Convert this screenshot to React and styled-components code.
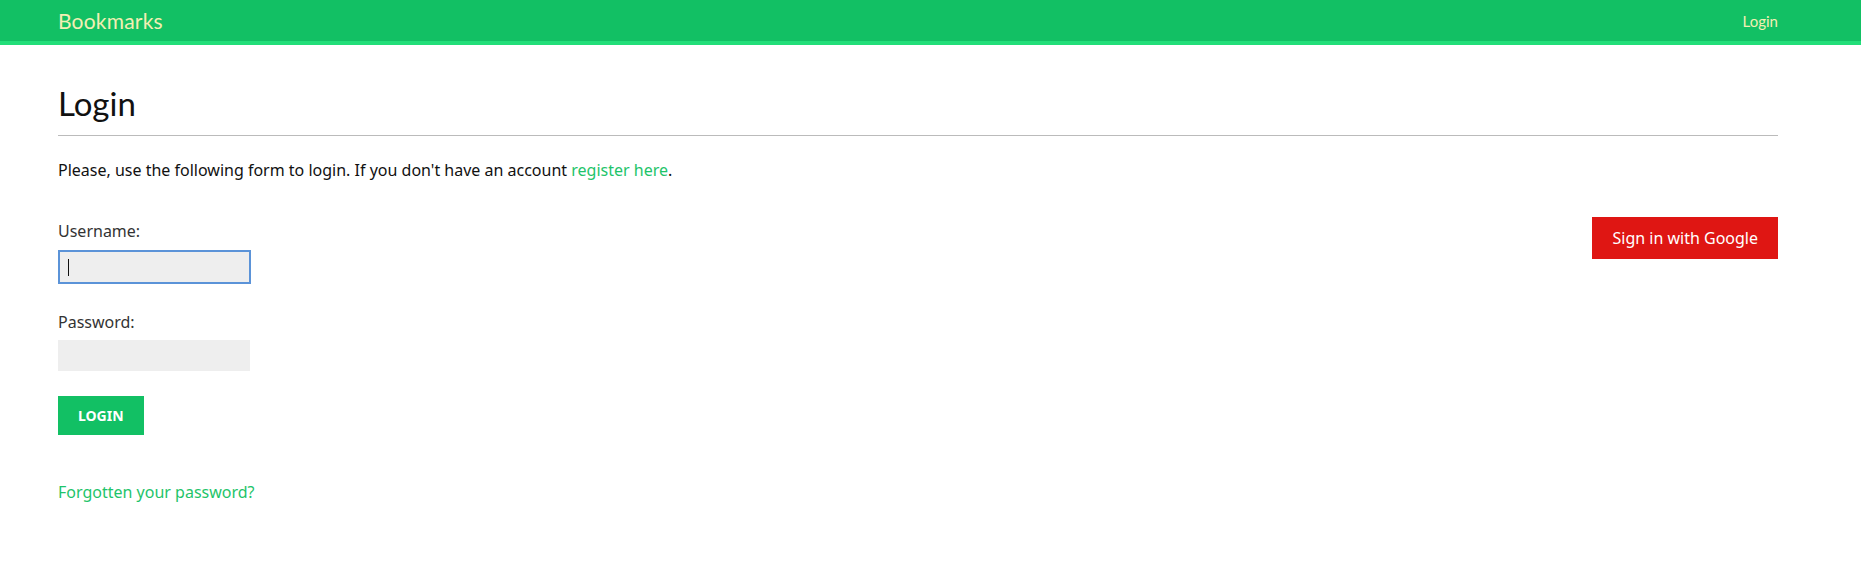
import React from "react";
import styled, { createGlobalStyle } from "styled-components";

const GREEN = "#12c064";
const GREEN_LIGHT = "#22de79";
const LINK = "#1ec46a";
const CREAM = "#f3efb4";
const RED = "#df1613";

const GlobalStyle = createGlobalStyle`
  html, body {
    margin: 0;
    padding: 0;
    background: #fff;
  }
  body {
    font-family: "Noto Sans", "Open Sans", sans-serif;
    color: #111;
  }
`;

const Header = styled.header`
  height: 41px;
  background: ${GREEN};
  border-bottom: 4px solid ${GREEN_LIGHT};
  display: flex;
  align-items: center;
  justify-content: space-between;
  padding: 0 83px 0 58px;
`;

const Brand = styled.span`
  font-family: Lato, "Noto Sans", sans-serif;
  font-size: 21px;
  color: ${CREAM};
  letter-spacing: 0.2px;
`;

const NavLink = styled.a`
  font-family: Lato, "Noto Sans", sans-serif;
  font-size: 15px;
  color: ${CREAM};
  text-decoration: none;
`;

const Main = styled.main`
  padding: 0 83px 0 58px;
`;

const Title = styled.h1`
  font-family: Lato, "Noto Sans", sans-serif;
  font-weight: 400;
  font-size: 33px;
  line-height: 40px;
  margin: 38px 0 0;
  padding-bottom: 12px;
  border-bottom: 1px solid #bbb;
  color: #111;
`;

const Intro = styled.p`
  font-size: 16px;
  line-height: 22px;
  margin: 23px 0 0;
`;

const Link = styled.a`
  color: ${LINK};
  text-decoration: none;
`;

const Row = styled.div`
  display: flex;
  justify-content: space-between;
  align-items: flex-start;
  margin-top: 36px;
`;

const Form = styled.form`
  display: flex;
  flex-direction: column;
  align-items: flex-start;
  padding-top: 3px;
`;

const Label = styled.label`
  font-size: 16px;
  line-height: 22px;
  color: #333;
  margin-bottom: ${(p) => p.$gap}px;
`;

const Input = styled.input`
  width: 192px;
  height: 31px;
  box-sizing: border-box;
  border: none;
  background: #eeeeee;
  padding: 0 8px;
  margin: 0 0 25px;
  font-size: 16px;
  outline: none;
`;

const Caret = styled.span`
  display: inline-block;
  width: 1px;
  height: 17px;
  background: #111;
`;

const FocusedField = styled.div`
  width: 193px;
  height: 34px;
  box-sizing: border-box;
  border: 2px solid #5b93d8;
  background: #eeeeee;
  display: flex;
  align-items: center;
  padding-left: 8px;
  margin-bottom: 27px;
`;

const Button = styled.button`
  font-family: "Noto Sans", sans-serif;
  border: none;
  cursor: pointer;
  color: #fff;
  background: ${(p) => p.$bg};
  height: ${(p) => p.$h}px;
  padding: 0 ${(p) => p.$px}px;
  font-size: ${(p) => p.$fs}px;
  font-weight: ${(p) => (p.$bold ? 700 : 400)};
  text-transform: ${(p) => (p.$upper ? "uppercase" : "none")};
`;

const Forgot = styled(Link)`
  font-size: 16px;
  line-height: 22px;
  margin-top: 46px;
`;

export default function App() {
  return (
    <>
      <GlobalStyle />
      <Header>
        <Brand>Bookmarks</Brand>
        <NavLink href="#">Login</NavLink>
      </Header>
      <Main>
        <Title>Login</Title>
        <Intro>
          Please, use the following form to login. If you don't have an account{" "}
          <Link href="#">register here</Link>.
        </Intro>
        <Row>
          <Form onSubmit={(e) => e.preventDefault()}>
            <Label $gap={8}>Username:</Label>
            <FocusedField>
              <Caret />
            </FocusedField>
            <Label $gap={7}>Password:</Label>
            <Input type="password" />
            <Button $bg={GREEN} $h={39} $px={20} $fs={14} $bold $upper>
              Login
            </Button>
            <Forgot href="#">Forgotten your password?</Forgot>
          </Form>
          <Button $bg={RED} $h={42} $px={20} $fs={16}>
            Sign in with Google
          </Button>
        </Row>
      </Main>
    </>
  );
}
